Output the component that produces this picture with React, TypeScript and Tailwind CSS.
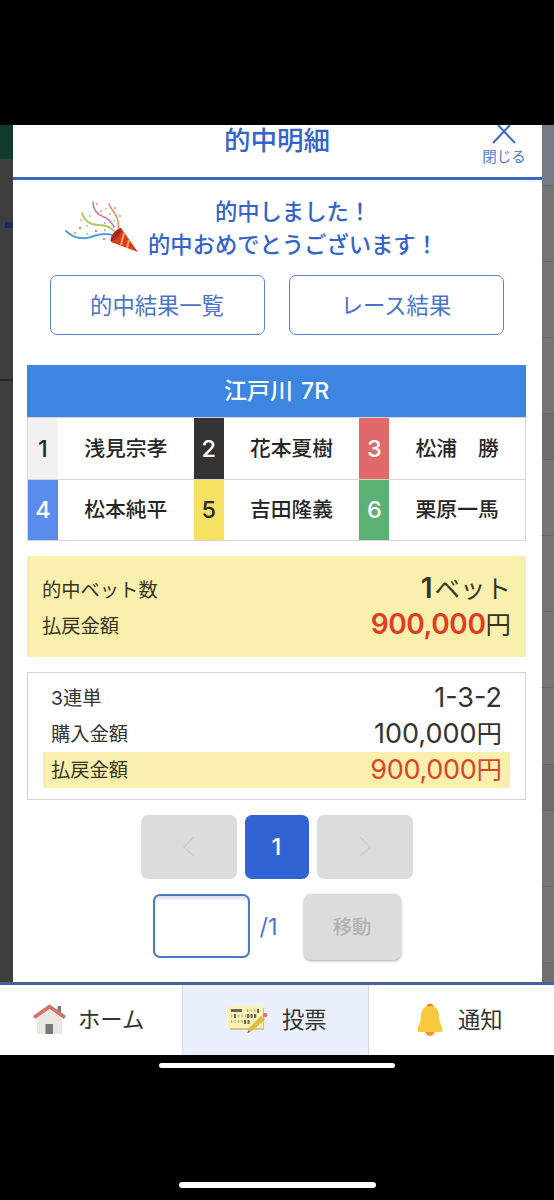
import React from 'react';

const racers = [
  { no: 1, name: '浅見宗孝', color: 'bg-[#f1f1f1] text-[#2b2b2b]' },
  { no: 2, name: '花本夏樹', color: 'bg-[#333333] text-white' },
  { no: 3, name: '松浦　勝', color: 'bg-[#e06a69] text-white' },
  { no: 4, name: '松本純平', color: 'bg-[#5a8cec] text-white' },
  { no: 5, name: '吉田隆義', color: 'bg-[#f6e163] text-[#2b2b2b]' },
  { no: 6, name: '栗原一馬', color: 'bg-[#5bb073] text-white' },
];

// Rows of the dimmed page on the right side of the dialog
const backdropRows = [
  'h-[61px] bg-[#737b86]',
  'h-[76px] bg-[#757575]',
  'h-[76px] bg-[#757575]',
  'h-[76px] bg-[#757575]',
  'h-[46px] bg-[#6d6d6d]',
  'h-[76px] bg-[#757575]',
  'h-[76px] bg-[#757575]',
  'h-[76px] bg-[#757575]',
  'h-[77px] bg-[#757575]',
  'h-[46px] bg-[#6d6d6d]',
  'h-[76px] bg-[#757575]',
  'h-[76px] bg-[#757575]',
  'h-[20px] bg-[#6f6f6f]',
];

function Popper() {
  return (
    <svg width="76" height="54" viewBox="0 0 76 54" fill="none" strokeLinecap="round">
      <path d="M2 32C8 38 17 41 27 38C35 35 42 34 48 36" stroke="#4ba3dc" strokeWidth="1.9" />
      <path d="M18 14C20 22 27 26 34 26C42 26 48 29 51 33" stroke="#a9cc56" strokeWidth="1.8" />
      <path d="M29 3C29 12 34 16 40 18C45 20 48 24 50 28" stroke="#ce78b6" strokeWidth="1.7" />
      <path d="M45 5C47 11 52 14 53 19C55 23 54 27 55 31" stroke="#de8a64" strokeWidth="1.5" />
      <path d="M47 43C46 38 52 30 57 29L74 53Z" fill="#dc3b26" />
      <path d="M46.500 42C46 37 52 30 57 29C59 33 53 42 46.500 42Z" fill="#a62b24" />
      <path d="M60 34L57 46M65 41L63 49" stroke="#f3ae35" strokeWidth="2" strokeLinecap="butt" />
      <g fill="#e38a62">
        <circle cx="11" cy="34" r="1" />
        <circle cx="16" cy="29" r="1.300" />
        <circle cx="32" cy="32" r="1.200" />
        <circle cx="37" cy="12" r="0.900" />
        <circle cx="51" cy="9" r="1" />
        <circle cx="56" cy="17" r="0.900" />
      </g>
      <g fill="#e8859d">
        <circle cx="33" cy="5" r="1" />
        <circle cx="40" cy="40" r="1.300" />
        <circle cx="41" cy="31" r="1" />
      </g>
      <g fill="#84b8de">
        <circle cx="26" cy="17" r="1" />
        <circle cx="41" cy="24" r="1" />
        <circle cx="46" cy="15" r="0.900" />
      </g>
      <g fill="#b4cd70">
        <circle cx="17" cy="21" r="1" />
        <circle cx="23" cy="27" r="1" />
        <circle cx="23" cy="35" r="1" />
        <circle cx="42" cy="10" r="0.900" />
        <circle cx="50" cy="22" r="0.900" />
      </g>
    </svg>
  );
}

function HomeIcon() {
  return (
    <svg width="33" height="32" viewBox="0 0 33 32">
      <path d="M24.500 2H28V11L24.500 8Z" fill="#777d78" />
      <path d="M4 14L16.500 4L29 14V30H4Z" fill="#e8e7e1" />
      <path d="M12.500 20H20V30H12.500Z" fill="#777777" />
      <path d="M1 13.500L16.500 2.500L32 13.500" fill="none" stroke="#d5706a" strokeWidth="3.800" />
    </svg>
  );
}

function TicketIcon() {
  return (
    <svg width="42" height="30" viewBox="0 0 42 30">
      <path d="M3 3H37V25H3Z" fill="#cdc896" />
      <path d="M1 1H36V23H1Z" fill="#fcf2b6" />
      <path d="M4 5.500H15" stroke="#69675a" strokeWidth="3" />
      <path d="M20 5.500H31M4 11H31M4 16.500H25" stroke="#b2ae88" strokeWidth="3" strokeDasharray="1.2 2.300" />
      <path d="M31 4V8M8 9V13M21 9V13M24.500 9V13M28 9V13M18 15V19M21.500 15V19" stroke="#69675a" strokeWidth="2" />
      <path d="M34 11L38 14.500L25 26L20.500 28L22 23Z" fill="#e2b93f" />
      <path d="M20.500 28L21.300 25.300L23.200 26.800Z" fill="#7b6540" />
      <circle cx="38" cy="10" r="2.300" fill="#e66f68" />
    </svg>
  );
}

function BellIcon() {
  return (
    <svg width="26" height="34" viewBox="0 0 26 34">
      <circle cx="13" cy="4.500" r="3.700" fill="#e5822f" />
      <circle cx="13" cy="28" r="5" fill="#e9973a" />
      <path d="M13 3C19.500 3 22 7 22 13C22 20 25.500 23 25.500 27C25.500 29 24 29.500 22 29H4C2 29.500 0.500 29 0.500 27C0.500 23 4 20 4 13C4 7 6.500 3 13 3Z" fill="#f6ca3a" />
    </svg>
  );
}

function Chevron({ d }: { d: string }) {
  return (
    <svg width="12" height="20" viewBox="0 0 12 20" fill="none" stroke="#cccccc" strokeWidth="1.300">
      <path d={d} />
    </svg>
  );
}

function Dialog() {
  return (
    <div className="flex w-[529px] flex-col bg-white">
      <div className="relative h-[55px] border-b-[3px] border-[#3a68c4]">
        <h1 className="pr-px text-center text-[26.500px] leading-[31px] font-medium text-[#3264cb]">的中明細</h1>
        <button className="absolute top-0 right-[14px] flex w-[48px] flex-col items-center text-[#4f7bd0]">
          <svg width="24" height="20" viewBox="0 0 24 20" fill="none" stroke="#3d69c4" strokeWidth="2">
            <path d="M6 0L23 18M18 0L1 18" />
          </svg>
          <span className="pt-px text-[14.500px] leading-[22px] whitespace-nowrap">閉じる</span>
        </button>
      </div>

      <div className="mt-[15px] flex h-[68px] pl-[51px] text-[#3264cb]">
        <div className="pt-[4px]">
          <Popper />
        </div>
        <div className="ml-[8px] w-[290px] text-center text-[22.300px] leading-[33px] font-medium whitespace-nowrap">
          <p>的中しました！</p>
          <p>的中おめでとうございます！</p>
        </div>
      </div>

      <div className="mt-[12px] flex justify-center gap-[24px] pr-[2px] text-[22.300px] text-[#4a74cc]">
        <button className="h-[60px] w-[215px] rounded-[7px] border-[1.500px] border-[#5b82cc] pt-[2px]">的中結果一覧</button>
        <button className="h-[60px] w-[215px] rounded-[7px] border-[1.500px] border-[#5b82cc] pt-[2px]">レース結果</button>
      </div>

      <div className="mr-[16px] ml-[14px] mt-[30px] flex h-[52px] items-center justify-center bg-[#3c86e2] text-[23px] font-medium text-white [word-spacing:2px]">
        江戸川 7R
      </div>
      <div className="mr-[16px] ml-[14px] grid h-[124px] grid-cols-3 grid-rows-2 gap-y-px border border-[#d6d6d6] bg-[#d6d6d6]">
        {racers.map(r => (
          <div key={r.no} className="flex bg-white text-[20.800px] font-medium text-[#262626]">
            <div className={`flex w-[30px] items-center justify-center text-[23.500px] ${r.color}`}>{r.no}</div>
            <div className="flex flex-1 items-center justify-center">{r.name}</div>
          </div>
        ))}
      </div>

      <div className="mr-[16px] ml-[14px] mt-[15px] h-[101px] bg-[#faf0ae] px-[15px] pt-[14px] text-[#38351f]">
        <div className="flex h-[36px] items-center justify-between">
          <span className="pt-[5px] text-[19.300px]">的中ベット数</span>
          <span className="text-[25.500px] leading-[36px]">
            <b className="mr-[2px] text-[28px] font-semibold">1</b>ベット
          </span>
        </div>
        <div className="flex h-[37px] items-center justify-between">
          <span className="pt-[4px] text-[19.300px]">払戻金額</span>
          <span className="text-[25.500px] leading-[36px]">
            <b className="text-[28px] font-semibold tracking-[-0.4px] text-[#e03a24]">900,000</b>円
          </span>
        </div>
      </div>

      <div className="mr-[16px] ml-[14px] mt-[15px] h-[128px] border-[1.500px] border-[#d2d2d2] px-[15px] pt-[7px] text-[#333333]">
        <div className="flex h-[36px] items-center justify-between px-[8px]">
          <span className="text-[19.300px]">3連単</span>
          <span className="text-[27px] leading-[36px]">1-3-2</span>
        </div>
        <div className="flex h-[36px] items-center justify-between px-[8px]">
          <span className="text-[19.300px]">購入金額</span>
          <span className="text-[25.500px] leading-[36px]">
            <span className="text-[27px]">100,000</span>円
          </span>
        </div>
        <div className="flex h-[36px] items-center justify-between bg-[#faf0ae] px-[8px]">
          <span className="text-[19.300px] text-[#38351f]">払戻金額</span>
          <span className="text-[25.500px] leading-[36px] text-[#dc432b]">
            <span className="text-[27px] tracking-[-0.3px]">900,000</span>円
          </span>
        </div>
      </div>

      <div className="mt-[15px] flex justify-center gap-2 pr-[2px]">
        <button className="flex h-[64px] w-[96px] items-center justify-center rounded-[7px] bg-[#dcdcdc]">
          <Chevron d="M11 0L1 10L11 19" />
        </button>
        <button className="h-[64px] w-[64px] rounded-[7px] bg-[#3164d2] text-[23.500px] font-medium text-white">1</button>
        <button className="flex h-[64px] w-[96px] items-center justify-center rounded-[7px] bg-[#dcdcdc]">
          <Chevron d="M1 0L11 10L1 19" />
        </button>
      </div>

      <div className="mt-[15px] flex items-start justify-center pr-[2px]">
        <input className="h-[64px] w-[97px] rounded-[7px] border-2 border-[#4c78c8] bg-white shadow-[inset_0_3px_3px_#dbe3f0]" />
        <span className="w-[54px] pl-[10px] text-[23.500px] leading-[65px] text-[#4a78d0]">/1</span>
        <button className="h-[66px] w-[97px] rounded-[7px] bg-[#dcdcdc] text-[19.300px] font-medium text-[#b2b2b2] shadow-[0_1px_3px_#aaaaaa]">移動</button>
      </div>
    </div>
  );
}

export default function App() {
  return (
    <div className="flex h-[1200px] w-[554px] flex-col items-center bg-black pt-[125px] font-['Inter','Noto_Sans_CJK_JP',sans-serif]">
      <div className="flex h-[857px] w-full">
        {/* Dimmed page, left edge */}
        <div className="flex w-[13px] flex-col items-end bg-[#3e3e3e]">
          <div className="h-[34px] w-full bg-[#113b2b]" />
          <div className="mt-[63px] h-[6px] w-[8px] bg-[#122c60]" />
          <div className="mt-[151px] h-[2px] w-full bg-[#20243a]" />
        </div>
        <Dialog />
        {/* Dimmed page, right edge */}
        <div className="w-[12px] overflow-hidden">
          {backdropRows.map((row, i) => (
            <div key={i} className={`border-b border-[#666666] ${row}`} />
          ))}
        </div>
      </div>

      {/* Tab bar */}
      <nav className="grid h-[73px] w-full grid-cols-[182px_187px_185px] border-t-[3px] border-[#46639f] bg-white text-[22.300px] text-[#333333]">
        <div className="flex items-center pl-[33px]">
          <HomeIcon />
          <span className="ml-[12px] pb-px">ホーム</span>
        </div>
        <div className="flex items-center border-x border-[#d5d9e3] bg-[#eaf0fd] pl-[44px]">
          <TicketIcon />
          <span className="ml-[13px] pb-px">投票</span>
        </div>
        <div className="flex items-center pl-[48px]">
          <BellIcon />
          <span className="ml-[15px] pb-px">通知</span>
        </div>
      </nav>

      <div className="mt-2 h-[5px] w-[236px] rounded-full bg-white" />
      <div className="mt-[114px] h-[6px] w-[197px] rounded-full bg-white" />
    </div>
  );
}
